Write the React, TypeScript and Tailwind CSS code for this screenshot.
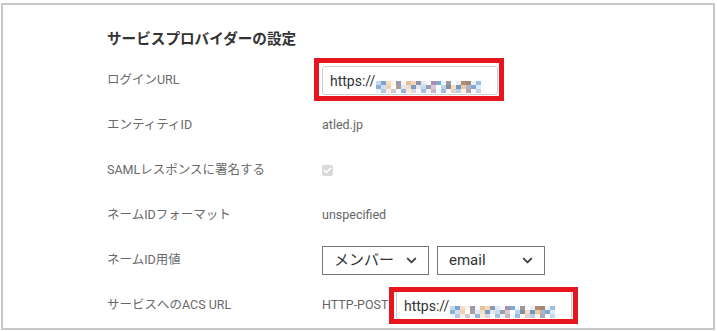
import { ChevronDown, Check } from 'lucide-react'

const labelFont = { fontFamily: 'Roboto, "Noto Sans CJK JP", sans-serif' }

// ぼかし (モザイク) 部分の色
const MOSAIC_A = [
  ['#c4d6ea', '#7aa4d4', '#f6dcc0', '#fdf3e8', '#9a9aa6', '#f6f6f6', '#e6c09a', '#f1d6b8', '#8d98b0', '#e0eaf5', '#f8f8f8', '#a890b0', '#7ea8d6', '#eef5fc', '#9a9a9a', '#fbfbfb', '#e6eef8', '#b88a70', '#9a8a7a', '#eef2f6', '#9cc0e4', '#fcfcfc'],
  ['#8eb0d8', '#cfe0f2', '#f0d2b0', '#ffffff', '#b09a9a', '#dde9f6', '#f4dcc0', '#7c9cc8', '#e6e6ea', '#c4dcf2', '#9e9eaa', '#dcc8dc', '#ffffff', '#b8d4ee', '#8c8c98', '#f2e0cc', '#7898c0', '#e8cca8', '#b4b4c8', '#84a6d0', '#dcecfa', '#ffffff'],
  ['#eef3f9', '#b0cae6', '#fcefe0', '#cacad4', '#f8f8f8', '#94b4dc', '#fde9d4', '#d8d8e2', '#fafafa', '#a8c0e0', '#eef3f9', '#c8b6c8', '#f3f8fd', '#a0bcdc', '#f8f8f8', '#e0d4c4', '#b8cee8', '#fcf1e4', '#aaaab4', '#f6f9fd', '#c4d6ea', '#fafafa'],
]

function Mosaic({ rows, cell }: { rows: string[][]; cell: number }) {
  return (
    <span className="inline-flex flex-col">
      {rows.map((row, i) => (
        <span key={i} className="flex">
          {row.map((c, j) => (
            <span key={j} style={{ width: cell, height: 4, background: c }} />
          ))}
        </span>
      ))}
    </span>
  )
}

function UrlInput({ width }: { width: number }) {
  return (
    <div
      className="flex h-[29px] items-center overflow-hidden rounded-[3px] border border-[#cfcfcf] bg-white pl-[7px] text-[14px] text-[#333]"
      style={{ width }}
    >
      <span className="leading-none">https://</span>
      <span className="ml-px mt-[2px]">
        <Mosaic rows={MOSAIC_A} cell={5} />
      </span>
    </div>
  )
}

function Select({ value, width }: { value: string; width: number }) {
  return (
    <div
      className="flex h-[29px] items-center justify-between border border-[#767676] bg-white pl-[11px] pr-[9px] text-[15px] text-[#333]"
      style={{ width }}
    >
      <span>{value}</span>
      <ChevronDown className="h-[15px] w-[15px] text-[#444]" strokeWidth={3.2} />
    </div>
  )
}

function Row({ label, children }: { label: string; children: React.ReactNode }) {
  return (
    <div className="flex h-[45px] items-center">
      <div className="w-[215px] shrink-0 text-[12.5px] text-[#6a6a6a]">{label}</div>
      <div className="flex items-center text-[12.5px] text-[#666]">{children}</div>
    </div>
  )
}

export default function App() {
  return (
    <div className="h-[331px] w-[717px] overflow-hidden bg-white pl-px pt-[3px]" style={labelFont}>
      <div className="h-[327px] w-[714px] overflow-hidden border-2 border-[#c8c8c8] pl-[104px]">
        <h3 className="mb-[9px] pt-[24px] text-[14.6px] font-bold leading-5 text-[#333]">
          サービスプロバイダーの設定
        </h3>

        <Row label="ログインURL">
          <div className="relative">
            <UrlInput width={176} />
            <div className="pointer-events-none absolute -bottom-[6px] -left-[8px] -right-[6px] -top-[8px] border-[5px] border-[#e8151f]" />
          </div>
        </Row>

        <Row label="エンティティID">atled.jp</Row>

        <Row label="SAMLレスポンスに署名する">
          <span className="flex h-[11px] w-[11px] items-center justify-center rounded-[2px] bg-[#dadada]">
            <Check className="h-[9px] w-[9px] text-white" strokeWidth={4} />
          </span>
        </Row>

        <Row label="ネームIDフォーマット">unspecified</Row>

        <Row label="ネームID用値">
          <div className="flex gap-[8px]">
            <Select value="メンバー" width={107} />
            <Select value="email" width={108} />
          </div>
        </Row>

        <Row label="サービスへのACS URL">
          <span className="w-[74px]">HTTP-POST</span>
          <div className="relative">
            <UrlInput width={176} />
            <div className="pointer-events-none absolute -bottom-[4px] -left-[7px] -right-[6px] -top-[4px] border-[5px] border-[#e8151f]" />
          </div>
        </Row>
      </div>
    </div>
  )
}
